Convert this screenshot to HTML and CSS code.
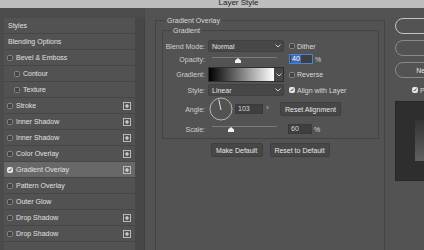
FILE: index.html
```html
<!DOCTYPE html>
<html lang="en">
<head>
  <meta charset="UTF-8">
  <title>Layer Style</title>
  <link rel="stylesheet" href="styles.css">
</head>
<body>

  <div class="titlebar"><span>Layer Style</span></div>

  <div class="dialog">
    <aside class="sidebar">
      <ul class="style-list">
        <li class="style-item plain">Styles</li>
        <li class="style-item plain">Blending Options</li>
        <li class="style-item"><span class="check"></span>Bevel &amp; Emboss</li>
        <li class="style-item sub"><span class="check"></span>Contour</li>
        <li class="style-item sub"><span class="check"></span>Texture</li>
        <li class="style-item"><span class="check"></span>Stroke<svg class="add" viewBox="0 0 8 8"><rect x="0.5" y="0.5" width="7" height="7"/><path d="M4 2v4M2 4h4"/></svg></li>
        <li class="style-item"><span class="check"></span>Inner Shadow<svg class="add" viewBox="0 0 8 8"><rect x="0.5" y="0.5" width="7" height="7"/><path d="M4 2v4M2 4h4"/></svg></li>
        <li class="style-item"><span class="check"></span>Inner Shadow<svg class="add" viewBox="0 0 8 8"><rect x="0.5" y="0.5" width="7" height="7"/><path d="M4 2v4M2 4h4"/></svg></li>
        <li class="style-item"><span class="check"></span>Color Overlay<svg class="add" viewBox="0 0 8 8"><rect x="0.5" y="0.5" width="7" height="7"/><path d="M4 2v4M2 4h4"/></svg></li>
        <li class="style-item active"><span class="check on"><svg viewBox="0 0 6 6"><path d="M1 3l1.5 1.5L5 1"/></svg></span>Gradient Overlay<svg class="add" viewBox="0 0 8 8"><rect x="0.5" y="0.5" width="7" height="7"/><path d="M4 2v4M2 4h4"/></svg></li>
        <li class="style-item"><span class="check"></span>Pattern Overlay</li>
        <li class="style-item"><span class="check"></span>Outer Glow</li>
        <li class="style-item"><span class="check"></span>Drop Shadow<svg class="add" viewBox="0 0 8 8"><rect x="0.5" y="0.5" width="7" height="7"/><path d="M4 2v4M2 4h4"/></svg></li>
        <li class="style-item"><span class="check"></span>Drop Shadow<svg class="add" viewBox="0 0 8 8"><rect x="0.5" y="0.5" width="7" height="7"/><path d="M4 2v4M2 4h4"/></svg></li>
      </ul>
      <div class="strip"></div>
    </aside>

    <main class="main">
      <section class="group outer">
        <div class="group-title">Gradient Overlay</div>

        <section class="group inner">
          <div class="group-title">Gradient</div>
          <div class="rows">
            <div class="row r-blend">
              <label class="lbl">Blend Mode:</label>
              <div class="select">Normal<svg class="chev" viewBox="0 0 6 4"><path d="M0.5 0.5L3 3l2.5-2.5"/></svg></div>
              <span class="check"></span><span class="opt">Dither</span>
            </div>
            <div class="row r-opacity">
              <label class="lbl">Opacity:</label>
              <div class="slider"><svg class="thumb" style="margin-left: 23px" viewBox="0 0 6 5"><path d="M3 0L6 2.5V5H0V2.5z"/></svg></div>
              <div class="num focus"><span class="sel">40</span></div>
              <span class="unit">%</span>
            </div>
            <div class="row r-gradient">
              <label class="lbl">Gradient:</label>
              <div class="gradient"><div class="gradient-fill"></div><div class="gradient-arrow"><svg class="chev" viewBox="0 0 6 4"><path d="M0.5 0.5L3 3l2.5-2.5"/></svg></div></div>
              <span class="check"></span><span class="opt">Reverse</span>
            </div>
            <div class="row r-style">
              <label class="lbl">Style:</label>
              <div class="select">Linear<svg class="chev" viewBox="0 0 6 4"><path d="M0.5 0.5L3 3l2.5-2.5"/></svg></div>
              <span class="check on"><svg viewBox="0 0 6 6"><path d="M1 3l1.5 1.5L5 1"/></svg></span><span class="opt">Align with Layer</span>
            </div>
            <div class="row r-angle">
              <label class="lbl">Angle:</label>
              <svg class="dial" viewBox="0 0 24 24"><circle cx="12" cy="12" r="11"/><path d="M12 13L9.8 2.5"/></svg>
              <div class="num angle">103</div>
              <span class="deg">°</span>
              <button class="btn reset-align">Reset Alignment</button>
            </div>
            <div class="row r-scale">
              <label class="lbl">Scale:</label>
              <div class="slider"><svg class="thumb" style="margin-left: 16px" viewBox="0 0 6 5"><path d="M3 0L6 2.5V5H0V2.5z"/></svg></div>
              <div class="num scale">60</div>
              <span class="unit">%</span>
            </div>
          </div>
        </section>

        <div class="footer-buttons">
          <button class="btn make-default">Make Default</button>
          <button class="btn reset-default">Reset to Default</button>
        </div>
      </section>
    </main>

    <div class="actions">
      <button class="pill primary">OK</button>
      <button class="pill">Cancel</button>
      <button class="pill">New Style...</button>
      <div class="preview-check"><span class="check on"><svg viewBox="0 0 6 6"><path d="M1 3l1.5 1.5L5 1"/></svg></span><span class="opt">Preview</span></div>
      <div class="preview"><div class="preview-swatch"></div></div>
    </div>
  </div>

</body>
</html>
```

FILE: styles.css
```css
* {
  box-sizing: border-box;
}
body {
  margin: 0;
  width: 424px;
  height: 250px;
  overflow: hidden;
  background: #535353;
  font-family: "Liberation Sans", Arial, sans-serif;
  font-size: 7px;
  color: #d4d4d4;
}
.titlebar {
  height: 8px;
  width: 424px;
  background: #bdbdbd;
  overflow: hidden;
  padding-left: 53px;
  text-align: center;
}
.titlebar span {
  display: block;
  margin-top: -1px;
  font-size: 8px;
  line-height: 8px;
  color: #222;
}
.dialog {
  display: flex;
  width: 520px;
  height: 242px;
}

/* left list of effects */
.sidebar {
  display: flex;
  flex: none;
  width: 145px;
  padding: 10px 0 0 4px;
  background: #4b4b4b;
}
.style-list {
  list-style: none;
  margin: 0;
  padding: 0;
  width: 131px;
  background: #525252;
}
.style-item {
  display: flex;
  align-items: center;
  height: 16px;
  padding: 0 4px 0 3px;
  border-bottom: 1px solid #464646;
  color: #e0e0e0;
  white-space: nowrap;
}
.style-item.plain {
  padding-left: 4px;
}
.style-item.sub {
  padding-left: 10px;
}
.style-item.active {
  background: #686868;
}
.style-item .check {
  margin-right: 3px;
}
.add {
  width: 8px;
  height: 8px;
  margin-left: auto;
}
.add rect {
  fill: none;
  stroke: #b8b8b8;
}
.add path {
  stroke: #f0f0f0;
  stroke-width: 1;
}
.strip {
  width: 10px;
  background: #474747;
  border-right: 1px solid #414141;
}

/* checkboxes */
.check {
  flex: none;
  display: inline-flex;
  width: 6px;
  height: 6px;
  border: 1px solid #858585;
  border-radius: 1.5px;
  background: #454545;
}
.check.on {
  border-color: #e4e4e4;
  background: #e4e4e4;
}
.check svg {
  width: 100%;
  height: 100%;
}
.check path {
  fill: none;
  stroke: #2a2a2a;
  stroke-width: 1.2;
}
.opt {
  margin-left: 2px;
  color: #dadada;
  white-space: nowrap;
}

/* main panel */
.main {
  flex: none;
  width: 250px;
  padding: 12px 10px 0 10px;
}
.group {
  border: 1px solid #444;
}
.group.outer {
  height: 260px;
  border-bottom: none;
}
.group-title {
  width: max-content;
  margin: -5px 0 0 9px;
  padding: 0 2px;
  line-height: 9px;
  background: #535353;
  color: #d8d8d8;
}
.group.inner {
  margin: 5px 5px 0 6px;
  padding-bottom: 1px;
}
.group.inner .group-title {
  margin-left: 8px;
}
.rows {
  margin-top: 5px;
}
.row {
  display: flex;
  align-items: center;
  white-space: nowrap;
}
.r-blend { height: 12px; }
.r-opacity { height: 14px; }
.r-gradient { height: 17px; }
.r-style { height: 14px; }
.r-angle { height: 24px; }
.r-scale { height: 16px; }
.lbl {
  flex: none;
  width: 42px;
  margin-right: 3px;
  text-align: right;
  color: #cfcfcf;
}
.select {
  display: flex;
  align-items: center;
  width: 76px;
  height: 12px;
  margin-right: 5px;
  padding-left: 3px;
  background: #474747;
  border: 1px solid #414141;
  border-radius: 2px;
  color: #e4e4e4;
}
.chev {
  width: 6px;
  height: 4px;
  margin-left: auto;
  margin-right: 2px;
}
.chev path {
  fill: none;
  stroke: #cfcfcf;
}
.slider {
  align-self: flex-start;
  width: 65px;
  height: 7px;
  margin: 5px 0 0 4px;
  border-top: 1px solid #7a7a7a;
}
.thumb {
  display: block;
  width: 6px;
  height: 5px;
}
.thumb path {
  fill: #f2f2f2;
}
.num {
  height: 10px;
  width: 24px;
  margin-left: 12px;
  padding-left: 2px;
  background: #3f3f3f;
  border: 1px solid #3a3a3a;
  color: #d8d8d8;
  line-height: 8px;
}
.num.focus {
  border-color: #4a84d6;
  padding-left: 1px;
}
.num .sel {
  display: inline-block;
  padding: 0 1px;
  background: #3c6cb8;
  color: #fff;
}
.num.angle {
  width: 28px;
  margin-left: 2px;
}
.num.scale {
  margin-left: 11px;
}
.unit {
  margin-left: 2px;
  color: #d8d8d8;
}
.gradient {
  display: flex;
  width: 76px;
  height: 15px;
  margin-right: 5px;
  border: 1px solid #2e2e2e;
}
.gradient-fill {
  flex: 1;
  background: linear-gradient(90deg, #000, #fff);
}
.gradient-arrow {
  display: flex;
  align-items: center;
  width: 9px;
  background: #474747;
}
.gradient-arrow .chev {
  margin: 0 auto;
}
.dial {
  flex: none;
  width: 24px;
  height: 24px;
  margin-left: 1px;
}
.dial circle {
  fill: none;
  stroke: #b5b5b5;
}
.dial path {
  stroke: #e0e0e0;
  stroke-width: 1;
}
.deg {
  width: 17px;
  padding-left: 3px;
  color: #d8d8d8;
}
.btn {
  height: 14px;
  padding: 0;
  background: #474747;
  border: 1px solid #3f3f3f;
  border-radius: 2px;
  color: #e6e6e6;
  font-family: inherit;
  font-size: 7px;
}
.reset-align {
  width: 61px;
}
.footer-buttons {
  display: flex;
  justify-content: center;
  gap: 7px;
  margin-top: 4px;
}
.make-default {
  width: 52px;
}
.reset-default {
  width: 60px;
}

/* right column */
.actions {
  flex: none;
  width: 80px;
  padding-top: 10px;
}
.pill {
  display: block;
  width: 80px;
  height: 16px;
  margin-bottom: 6px;
  background: transparent;
  border: 1px solid #8a8a8a;
  border-radius: 8px;
  color: #e8e8e8;
  font-family: inherit;
  font-size: 7px;
}
.pill.primary {
  border-color: #c4c4c4;
}
.preview-check {
  display: flex;
  align-items: center;
  height: 6px;
  margin: 9px 0 0 17px;
}
.preview {
  width: 80px;
  height: 80px;
  margin-top: 8px;
  padding: 18px 0 0 19px;
  background: #2e2e2e;
  border: 1px solid #282828;
}
.preview-swatch {
  width: 40px;
  height: 41px;
  background: linear-gradient(#343434, #606060);
}
```
